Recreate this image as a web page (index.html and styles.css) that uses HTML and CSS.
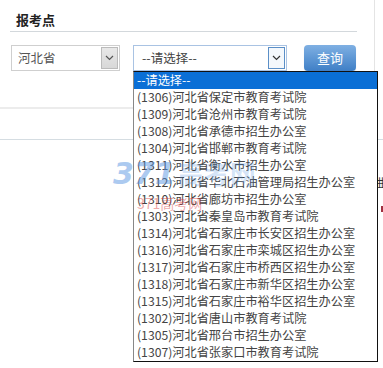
FILE: index.html
```html
<!DOCTYPE html>
<html lang="zh">
<head>
<meta charset="utf-8">
<link rel="stylesheet" href="styles.css">
</head>
<body>
<div class="page">
  <div class="card">
    <div class="title">报考点</div>
    <div class="controls">
      <div class="sel sel-prov">
        <span class="sel-text">河北省</span>
        <span class="arrow"><svg width="9" height="6" viewBox="0 0 9 6"><path d="M1 1 L4.5 4.5 L8 1" fill="none" stroke="#555" stroke-width="1.2"/></svg></span>
      </div>
      <div class="sel sel-site">
        <span class="sel-text">--请选择--</span>
        <span class="arrow"><svg width="9" height="6" viewBox="0 0 9 6"><path d="M1 1 L4.5 4.5 L8 1" fill="none" stroke="#333" stroke-width="1.2"/></svg></span>
      </div>
      <button class="btn">查询</button>
    </div>
  </div>
  <div class="below"></div>
  <div class="side">
    <span class="side-text">曲</span>
    <span class="side-dot"></span>
  </div>
  <ul class="list">
    <li class="active">--请选择--</li>
    <li>(1306)河北省保定市教育考试院</li>
    <li>(1309)河北省沧州市教育考试院</li>
    <li>(1308)河北省承德市招生办公室</li>
    <li>(1304)河北省邯郸市教育考试院</li>
    <li>(1311)河北省衡水市招生办公室</li>
    <li>(1312)河北省华北石油管理局招生办公室</li>
    <li>(1310)河北省廊坊市招生办公室</li>
    <li>(1303)河北省秦皇岛市教育考试院</li>
    <li>(1314)河北省石家庄市长安区招生办公室</li>
    <li>(1316)河北省石家庄市栾城区招生办公室</li>
    <li>(1317)河北省石家庄市桥西区招生办公室</li>
    <li>(1318)河北省石家庄市新华区招生办公室</li>
    <li>(1315)河北省石家庄市裕华区招生办公室</li>
    <li>(1302)河北省唐山市教育考试院</li>
    <li>(1305)河北省邢台市招生办公室</li>
    <li>(1307)河北省张家口市教育考试院</li>
  </ul>
  <div class="wm"><span class="wm-num">371</span><span class="wm-cn">高考网</span></div>
  <div class="wm2">371高考网</div>
</div>
</body>
</html>
```
FILE: styles.css
```css
* { box-sizing: border-box; }
html, body { margin: 0; padding: 0; background: #fff; }
body { font-family: "Noto Sans CJK SC", "Noto Sans", sans-serif; width: 383px; height: 368px; overflow: hidden; }
.page { position: relative; width: 383px; height: 368px; }
.card {
  width: 375px;
  height: 109px;
  background: #fff;
  border-right: 1px solid #e4e4e4;
  border-bottom: 2px solid #ececec;
  padding: 10px 0 0 10px;
}
.title {
  width: 347px;
  font-size: 13px;
  font-weight: bold;
  color: #222;
  line-height: 20px;
  padding-left: 6px;
  padding-bottom: 1px;
  border-bottom: 1px solid #d3d8dc;
}
.controls {
  display: flex;
  align-items: center;
  margin-top: 13px;
  padding-left: 1px;
}
.sel {
  height: 26px;
  border: 1px solid #cfcfcf;
  background: #fff;
  display: flex;
  align-items: center;
  justify-content: space-between;
  padding: 0 1px 0 6px;
  font-size: 12.5px;
  color: #555;
}
.sel-prov { width: 109px; }
.sel-site { width: 154px; margin-left: 13px; border-color: #a9c3e3; color: #444; padding-left: 8px; }
.sel-text { line-height: 24px; }
.arrow {
  width: 17px;
  height: 22px;
  display: flex;
  align-items: center;
  justify-content: center;
  border: 1px solid #bbb;
  background: linear-gradient(#e8e8e8, #d8d8d8);
}
.sel-site .arrow { border-color: #5b8fc7; background: #f4f8fc; }
.btn {
  margin-left: 17px;
  margin-top: -1px;
  width: 52px;
  height: 26px;
  border: 0;
  border-radius: 4px;
  background: linear-gradient(#7fb0e3, #3f7fc6);
  color: #fff;
  font-family: "Noto Sans CJK SC", sans-serif;
  font-size: 13px;
  padding: 0;
  box-shadow: 0 1px 1px rgba(0,0,0,0.15);
}
.below {
  margin-top: 30px;
  width: 383px;
  border-top: 1px solid #d5dde2;
}
.side {
  position: absolute;
  left: 376px;
  top: 92px;
  width: 7px;
  height: 150px;
  border-left: 1px solid #ddd;
}
.side-text { position: absolute; left: -2px; top: 82px; font-size: 12px; color: #333; }
.side-dot { position: absolute; left: 4px; top: 114px; width: 3px; height: 6px; background: #a03040; }
.list {
  position: absolute;
  left: 133px;
  top: 71px;
  width: 245px;
  margin: 0;
  padding: 0;
  list-style: none;
  background: #fff;
  border: 1px solid #111;
  border-left-color: #888;
}
.list li {
  height: 17px;
  line-height: 17px;
  font-size: 12.2px;
  color: #444;
  padding-left: 3px;
  white-space: nowrap;
}
.list li.active { background: #0a6fd6; color: #fff; }
.wm {
  position: absolute;
  left: 113px;
  top: 154px;
  pointer-events: none;
  display: flex;
  align-items: baseline;
}
.wm-num {
  font-family: "DejaVu Sans", sans-serif;
  font-size: 30px;
  font-weight: bold;
  font-style: italic;
  color: rgba(90, 150, 225, 0.5);
}
.wm-cn {
  font-size: 26px;
  font-weight: bold;
  color: rgba(90, 150, 225, 0.25);
  margin-left: 2px;
}
.wm2 {
  position: absolute;
  left: 137px;
  top: 193px;
  font-size: 14px;
  color: rgba(220, 60, 60, 0.45);
  pointer-events: none;
}
```
